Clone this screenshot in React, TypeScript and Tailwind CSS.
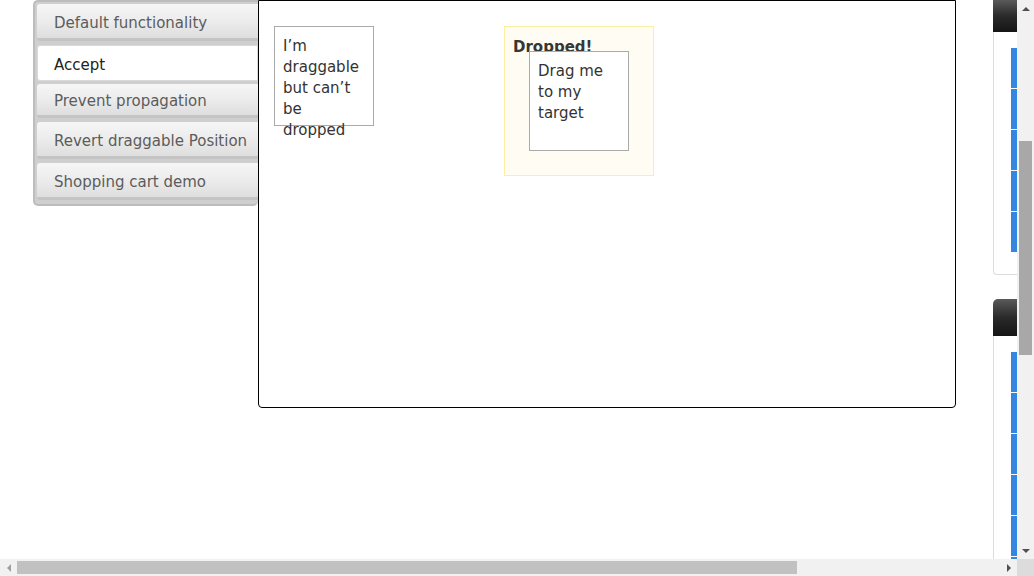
import React from "react";

const tabs = [
  { label: "Default functionality", h: "h-[37px]", mt: "mt-0", active: false },
  { label: "Accept", h: "h-[36px]", mt: "mt-[4px]", active: true },
  { label: "Prevent propagation", h: "h-[34px]", mt: "mt-[3px]", active: false },
  { label: "Revert draggable Position", h: "h-[37px]", mt: "mt-[4px]", active: false },
  { label: "Shopping cart demo", h: "h-[37px]", mt: "mt-[4px]", active: false },
];

function BlueBars() {
  return (
    <div className="flex flex-col gap-[1px] items-end">
      {[0, 1, 2, 3, 4].map((i) => (
        <div key={i} className="w-[6px] h-[40px] bg-[#3586e0]" />
      ))}
    </div>
  );
}

export default function App() {
  return (
    <div
      className="w-[1034px] h-[576px] overflow-hidden bg-white flex flex-col text-[#333]"
      style={{ fontFamily: '"DejaVu Sans", Verdana, sans-serif' }}
    >
      <div className="flex h-[559px]">
        {/* page content */}
        <div className="w-[1017px] flex items-start">
          {/* tabs */}
          <div className="ml-[33px] w-[225px] h-[206px] bg-[#cfcfcf] border-[2px] border-[#bdbdbd] border-r-0 rounded-l-[5px] rounded-b-[5px] pl-[2px] pt-[2px] flex flex-col">
            {tabs.map((t) => (
              <div
                key={t.label}
                className={`${t.h} ${t.mt} flex items-center pt-[4px] text-[15px] whitespace-nowrap ${
                  t.active
                    ? "pl-[16px] bg-white text-[#222] border border-[#d9d9d9] rounded-l-[3px]"
                    : "pl-[17px] bg-gradient-to-b from-[#f6f6f6] via-[#ececec] to-[#dedede] text-[#5c5c5c] border-b-[3px] border-[#c4c4c4] rounded-l-[3px]"
                }`}
              >
                {t.label}
              </div>
            ))}
          </div>
          {/* panel */}
          <div className="w-[698px] h-[408px] border border-black rounded-b-[4px] bg-white flex items-start pl-[15px] pt-[25px]">
            <div className="w-[100px] h-[100px] shrink-0 border border-[#aaa] px-[8px] pt-[9px] text-[15px] leading-[21px] text-[#333]">
              I’m draggable but can’t be dropped
            </div>
            <div className="relative ml-[130px] w-[150px] h-[150px] shrink-0 border border-[#fcefa1] bg-[#fffcf3] px-[8px] pt-[10px]">
              <div className="text-[15px] font-bold text-[#363636] leading-[20px]">Dropped!</div>
              <div className="absolute left-[24px] top-[24px] w-[100px] h-[100px] border border-[#aaa] bg-white px-[8px] pt-[9px] text-[15px] leading-[21px] text-[#333]">
                Drag me to my target
              </div>
            </div>
          </div>
          {/* right strip */}
          <div className="ml-[37px] w-[24px] h-[559px] flex flex-col">
            <div className="h-[32px] bg-gradient-to-b from-[#5a5a5a] via-[#2a2a2a] to-[#151515]" />
            <div className="h-[243px] border-l border-b border-[#dcdcdc] rounded-bl-[4px] pt-[16px] flex flex-col items-end">
              <BlueBars />
            </div>
            <div className="h-[24px]" />
            <div className="h-[37px] rounded-tl-[5px] bg-gradient-to-b from-[#5a5a5a] via-[#2a2a2a] to-[#151515]" />
            <div className="flex-1 border-l border-[#dcdcdc] pt-[16px] flex flex-col items-end overflow-hidden">
              <BlueBars />
              <div className="mt-[1px]"><BlueBars /></div>
            </div>
          </div>
        </div>
        {/* vertical scrollbar */}
        <div className="w-[17px] h-[559px] bg-[#f1f1f1] flex flex-col items-center">
          <div className="h-[17px] flex items-center justify-center">
            <div className="w-0 h-0 border-l-[4px] border-r-[4px] border-b-[4px] border-l-transparent border-r-transparent border-b-[#505050]" />
          </div>
          <div className="mt-[124px] w-[13px] h-[214px] bg-[#a8a8a8]" />
          <div className="flex-1" />
          <div className="h-[17px] flex items-center justify-center">
            <div className="w-0 h-0 border-l-[4px] border-r-[4px] border-t-[4px] border-l-transparent border-r-transparent border-t-[#505050]" />
          </div>
        </div>
      </div>
      {/* horizontal scrollbar */}
      <div className="flex h-[17px]">
        <div className="w-[1017px] bg-[#f1f1f1] flex items-center">
          <div className="w-[17px] flex items-center justify-center">
            <div className="w-0 h-0 border-t-[4px] border-b-[4px] border-r-[4px] border-t-transparent border-b-transparent border-r-[#a0a0a0]" />
          </div>
          <div className="w-[780px] h-[13px] bg-[#c1c1c1]" />
          <div className="flex-1" />
          <div className="w-[17px] flex items-center justify-center">
            <div className="w-0 h-0 border-t-[4px] border-b-[4px] border-l-[4px] border-t-transparent border-b-transparent border-l-[#505050]" />
          </div>
        </div>
        <div className="w-[17px] bg-[#dcdcdc]" />
      </div>
    </div>
  );
}
